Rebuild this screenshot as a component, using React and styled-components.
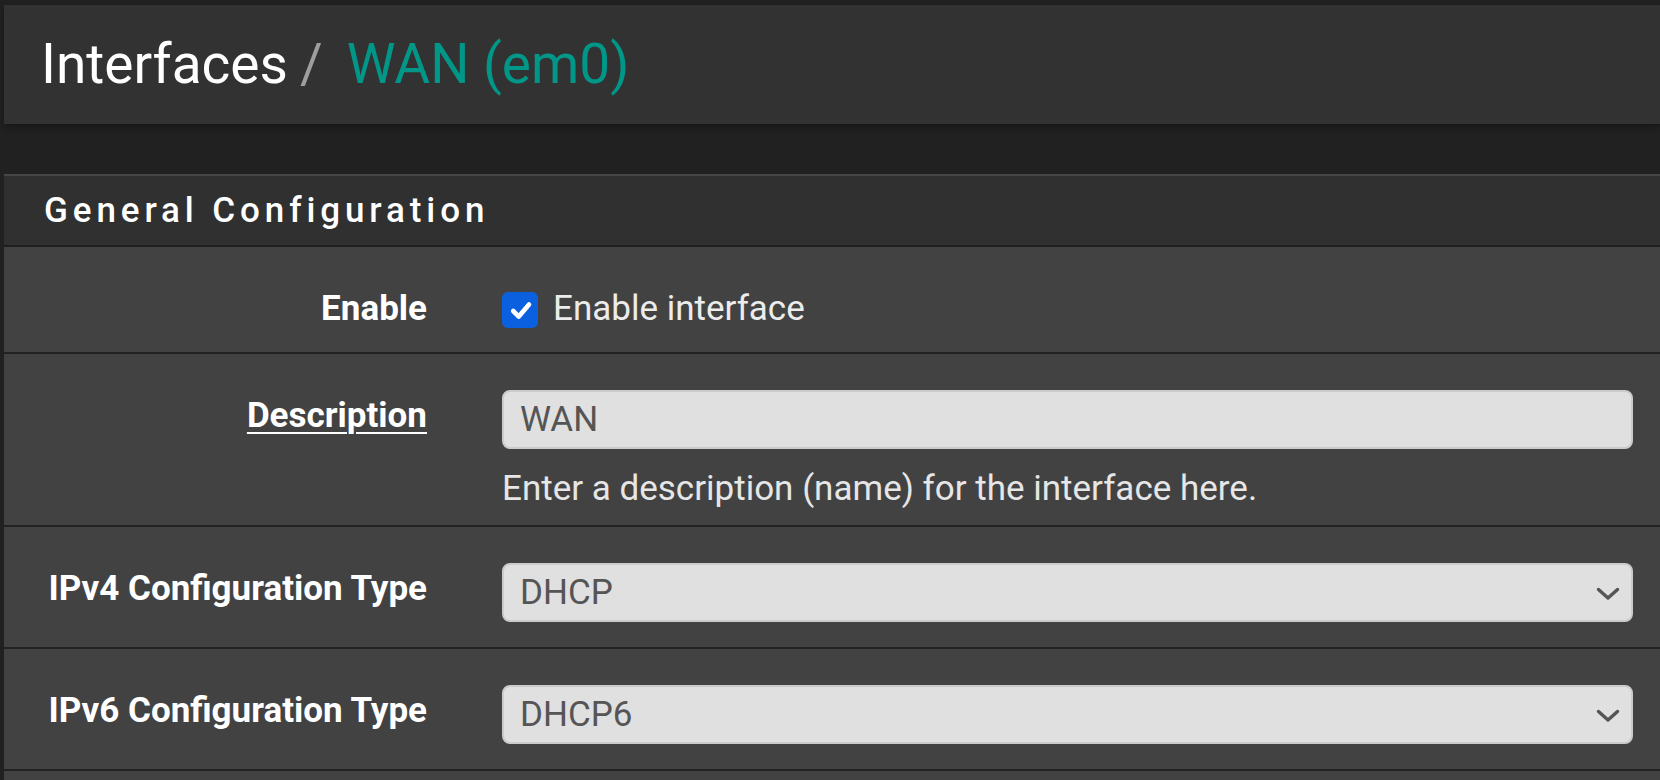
import React from "react";
import styled, { createGlobalStyle } from "styled-components";

const GlobalStyle = createGlobalStyle`
  html, body {
    margin: 0;
    padding: 0;
    background: #212121;
  }
  body {
    font-family: Roboto, "Liberation Sans", Arial, sans-serif;
    color: #fff;
  }
`;

const rows = [
  { label: "IPv4 Configuration Type", value: "DHCP" },
  { label: "IPv6 Configuration Type", value: "DHCP6" }
];

const App = () => {
  return (
    <Page>
      <GlobalStyle />
      <Header>
        <Title>
          Interfaces
          <Sep>/</Sep>
          <Current>WAN (em0)</Current>
        </Title>
      </Header>

      <Panel>
        <PanelHeading>
          <PanelTitle>General Configuration</PanelTitle>
        </PanelHeading>

        <Row $pb={17}>
          <Label>Enable</Label>
          <Field>
            <CheckLabel>
              <CheckBox>
                <svg width="36" height="36" viewBox="0 0 36 36">
                  <path
                    d="M11.2 19 L16.8 24.6 L27 12.4"
                    fill="none"
                    stroke="#fff"
                    strokeWidth="4.6"
                    strokeLinecap="round"
                    strokeLinejoin="round"
                  />
                </svg>
              </CheckBox>
              Enable interface
            </CheckLabel>
          </Field>
        </Row>

        <Row $pb={10}>
          <Label $underline>Description</Label>
          <Field>
            <InputBox>WAN</InputBox>
            <Help>Enter a description (name) for the interface here.</Help>
          </Field>
        </Row>

        {rows.map(r => (
          <Row key={r.label} $pb={25}>
            <Label>{r.label}</Label>
            <Field>
              <InputBox>
                {r.value}
                <Chevron width="24" height="14" viewBox="0 0 24 14">
                  <path
                    d="M2.5 2.5 L12 11 L21.5 2.5"
                    fill="none"
                    stroke="#555"
                    strokeWidth="3.4"
                    strokeLinecap="round"
                    strokeLinejoin="round"
                  />
                </Chevron>
              </InputBox>
            </Field>
          </Row>
        ))}

        <Row $pb={24} />
      </Panel>
    </Page>
  );
};

const Page = styled.div`
  height: 100vh;
  overflow: hidden;
  padding: 5px 0 0 4px;
  box-sizing: border-box;
  background: #212121;
`;

const Header = styled.div`
  background: #323232;
  height: 119px;
  box-sizing: border-box;
  padding: 28px 0 0 37px;
  box-shadow: 0 3px 6px rgba(0, 0, 0, 0.35);
  margin-bottom: 50px;
`;

const Title = styled.h1`
  margin: 0;
  font-size: 55px;
  font-weight: 400;
  line-height: 62px;
  color: #fff;
  white-space: nowrap;
`;

const Sep = styled.span`
  color: #9e9e9e;
  margin: 0 24px 0 12px;
`;

const Current = styled.span`
  color: #009688;
`;

const Panel = styled.div`
  background: #424242;
  border-top: 2px solid #464646;
`;

const PanelHeading = styled.div`
  background: #303030;
  border-bottom: 2px solid #1f1f1f;
  padding: 14px 0 13px 40px;
`;

const PanelTitle = styled.h2`
  margin: 0;
  font-size: 35px;
  font-weight: 500;
  line-height: 42px;
  letter-spacing: 4.9px;
  color: #fff;
`;

const Row = styled.div`
  display: grid;
  grid-template-columns: 423px 1fr;
  column-gap: 75px;
  padding: 36px 27px ${p => p.$pb}px 0;
  border-bottom: 2px solid #222;
  font-size: 35px;
  line-height: 52px;
`;

const Label = styled.div`
  text-align: right;
  font-weight: 700;
  color: #fff;
  text-decoration: ${p => (p.$underline ? "underline" : "none")};
  text-decoration-thickness: 2px;
  text-underline-offset: 5px;
  justify-self: end;
  align-self: start;
  white-space: nowrap;
`;

const Field = styled.div`
  display: flex;
  flex-direction: column;
  min-width: 0;
`;

const CheckLabel = styled.label`
  display: flex;
  align-items: flex-start;
  color: #ececec;
`;

const CheckBox = styled.span`
  width: 36px;
  height: 36px;
  flex: none;
  margin: 9px 15px 0 0;
  border-radius: 6px;
  background: #0a60df;
  display: flex;
  align-items: center;
  justify-content: center;
`;

const InputBox = styled.div`
  position: relative;
  height: 59px;
  box-sizing: border-box;
  border: 2px solid #cbcbcb;
  border-radius: 8px;
  background: #e0e0e0;
  color: #555;
  padding: 0 16px;
  display: flex;
  align-items: center;
`;

const Chevron = styled.svg`
  position: absolute;
  right: 11px;
  top: 50%;
  margin-top: -6px;
`;

const Help = styled.div`
  margin-top: 14px;
  color: #e6e6e6;
`;

export default App;
